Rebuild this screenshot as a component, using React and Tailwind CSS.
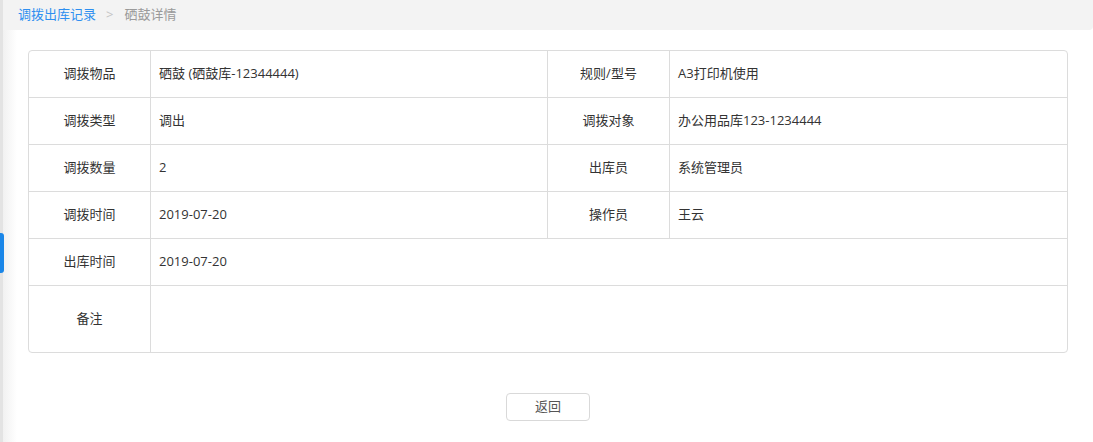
export default function App() {
  const font = { fontFamily: '"Open Sans", "Noto Sans CJK SC", sans-serif' };
  const rows = [
    ["调拨物品", "硒鼓 (硒鼓库-12344444)", "规则/型号", "A3打印机使用"],
    ["调拨类型", "调出", "调拨对象", "办公用品库123-1234444"],
    ["调拨数量", "2", "出库员", "系统管理员"],
    ["调拨时间", "2019-07-20", "操作员", "王云"],
  ];
  return (
    <div className="relative flex h-[442px] w-[1093px] overflow-hidden bg-white text-[13px] text-[#333]" style={font}>
      <div className="w-[3px] shrink-0 bg-[#e3e3e3]" />
      <div className="absolute left-0 top-[233px] h-[40px] w-[4px] rounded-r-[3px] bg-[#1a86e8]" />
      <div className="flex min-w-0 flex-1 flex-col bg-gradient-to-r from-[#f1f1f1] via-white via-[14px] to-white">
        <div className="flex h-[30px] items-center rounded-br-[4px] bg-[#f3f3f3] pl-[15px]">
          <span className="text-[#2e8ff0]">调拨出库记录</span>
          <span className="ml-[10px] mr-[11px] text-[#c4c4c4]">&gt;</span>
          <span className="text-[#9a9a9a]">硒鼓详情</span>
        </div>
        <div className="ml-[25px] mt-[20px] w-[1040px] overflow-hidden rounded-[4px] border border-[#dcdcdc] bg-white">
          {rows.map((r, i) => (
            <div
              key={i}
              className={`grid grid-cols-[121px_397px_122px_1fr] ${i === 0 ? "h-[46px]" : "h-[47px] border-t border-[#dcdcdc]"}`}
            >
              <div className="flex items-center justify-center">{r[0]}</div>
              <div className="flex items-center border-l border-[#dcdcdc] pl-[8px]">{r[1]}</div>
              <div className="flex items-center justify-center border-l border-[#dcdcdc]">{r[2]}</div>
              <div className="flex items-center border-l border-[#dcdcdc] pl-[8px]">{r[3]}</div>
            </div>
          ))}
          <div className="grid h-[47px] grid-cols-[121px_1fr] border-t border-[#dcdcdc]">
            <div className="flex items-center justify-center">出库时间</div>
            <div className="flex items-center border-l border-[#dcdcdc] pl-[8px]">2019-07-20</div>
          </div>
          <div className="grid h-[67px] grid-cols-[121px_1fr] border-t border-[#dcdcdc]">
            <div className="flex items-center justify-center">备注</div>
            <div className="border-l border-[#dcdcdc]" />
          </div>
        </div>
        <div className="mt-[40px] flex justify-center">
          <button className="h-[28px] w-[84px] rounded-[4px] border border-[#d9d9d9] bg-white text-[13px] text-[#555]">
            返回
          </button>
        </div>
      </div>
    </div>
  );
}
